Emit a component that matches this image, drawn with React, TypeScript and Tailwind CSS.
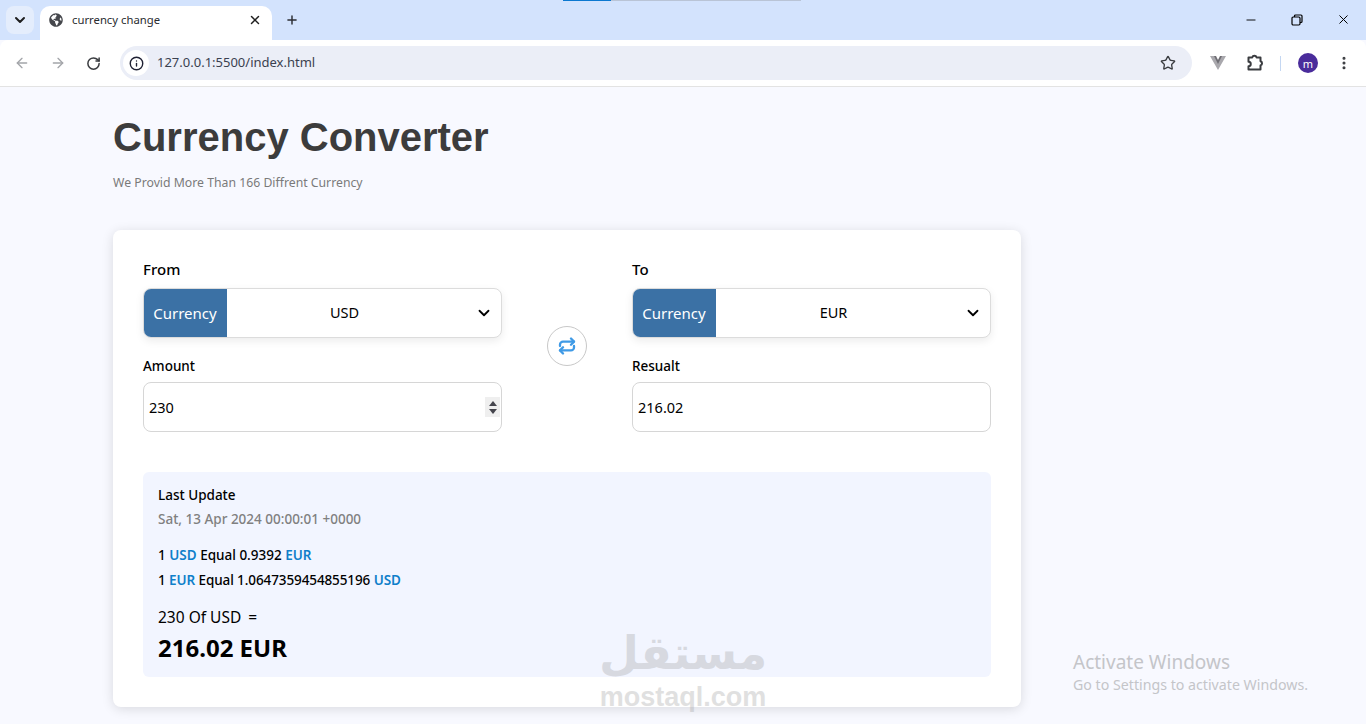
import React from 'react';
import { ArrowLeft, ArrowRight, ChevronDown, Info, Plus, RotateCw, Star, X, Minus, EllipsisVertical } from 'lucide-react';
import { FaGlobeAmericas } from 'react-icons/fa';

const ui = "font-['Noto_Sans','Open_Sans',sans-serif]";

function BrowserChrome() {
  return (
    <div className={`shrink-0 ${ui}`}>
      <div className="relative flex h-10 items-end bg-[#d3e3fd]">
        <div className="absolute left-[563px] top-0 h-px w-12 bg-[#0b78d0]" />
        <div className="absolute left-[611px] top-0 h-px w-[190px] bg-[#b9c4d6]" />
        <div className="mb-1.5 ml-1.5 flex h-7 w-7 items-center justify-center rounded-lg bg-[#e4edfc]">
          <ChevronDown className="h-4 w-4 text-[#1f1f1f]" strokeWidth={3} />
        </div>
        <div className="ml-1.5 flex h-[34px] w-[232px] items-center rounded-t-[10px] bg-white pb-[6px] pl-[9px] pr-2.5">
          <FaGlobeAmericas className="h-[14px] w-[14px] text-[#45474c]" />
          <span className="ml-[9px] flex-1 text-[11.3px] text-[#2a2c30]">currency change</span>
          <X className="h-[14px] w-[14px] text-[#1f1f1f]" strokeWidth={2.5} />
        </div>
        <Plus className="mb-[13px] ml-[13px] h-[14px] w-[14px] text-[#2c2e33]" strokeWidth={2.5} />
        <div className="flex-1" />
        <div className="mb-[13px] mr-[15px] flex items-center gap-[33px] text-black">
          <Minus className="h-[14px] w-[14px]" strokeWidth={1.6} />
          <svg viewBox="0 0 12 12" className="h-3 w-3" fill="none" stroke="currentColor" strokeWidth="1.2">
            <rect x="1" y="3" width="8" height="8" rx="1.2" />
            <path d="M3.5 3V2a1 1 0 0 1 1-1H10a1 1 0 0 1 1 1v5.5a1 1 0 0 1-1 1H9" />
          </svg>
          <X className="h-[15px] w-[15px]" strokeWidth={1.6} />
        </div>
      </div>
      <div className="flex h-[47px] items-center rounded-t-lg border-b border-[#e3e3e3] bg-white">
        <ArrowLeft className="ml-[14px] h-4 w-4 text-[#a3a5a9]" strokeWidth={2} />
        <ArrowRight className="ml-5 h-4 w-4 text-[#a3a5a9]" strokeWidth={2} />
        <RotateCw className="ml-5 h-[15px] w-[15px] text-[#3a3c40]" strokeWidth={2.4} />
        <div className="ml-[19px] flex h-[34px] w-[1072px] items-center rounded-full bg-[#ebeef7] pl-[3px] pr-[16px]">
          <div className="flex h-[26px] w-[26px] items-center justify-center rounded-full bg-white">
            <Info className="h-[15px] w-[15px] text-[#1f2133]" strokeWidth={2.2} />
          </div>
          <span className="ml-2 flex-1 text-[13px] text-[#3a4150]">127.0.0.1:5500/index.html</span>
          <Star className="h-4 w-4 text-[#3a3c40]" strokeWidth={2} />
        </div>
        <svg viewBox="0 0 16 14" className="ml-[18px] h-[14px] w-4">
          <path d="M0 0h5l3 5 3-5h5L8 14z" fill="#a9a8ad" />
          <path d="M4 0h2l2 4 2-4h2L8 8z" fill="#6f6e74" />
        </svg>
        <svg viewBox="0 0 18 18" className="ml-[20px] h-[18px] w-[18px]" fill="none" stroke="#3a3c40" strokeWidth="2" strokeLinejoin="round">
          <path d="M2.5 3.5h3.7a2.3 2.3 0 0 1 4.4 0h3.9v3.7a2.2 2.2 0 0 1 0 4.2v4.1H2.5v-3.2a2 2 0 0 0 0-4.5z" />
        </svg>
        <div className="ml-[16px] h-[15px] w-px bg-[#c4d7f2]" />
        <div className="ml-[17px] flex h-5 w-5 items-center justify-center rounded-full bg-[#4a2c9b] text-[11px] leading-none text-white">m</div>
        <EllipsisVertical className="ml-[18px] h-4 w-4 text-[#3a3c40]" strokeWidth={2.6} />
      </div>
    </div>
  );
}

function CurrencySelect({ code }: { code: string }) {
  return (
    <div className="flex h-[50px] overflow-hidden rounded-lg border border-[#dcdcdc] bg-white shadow-[0_3px_8px_rgba(0,0,0,0.08)]">
      <div className="-my-px -ml-px flex w-[84px] items-center justify-center bg-[#3b71a5] text-[15px] text-white">Currency</div>
      <div className="flex flex-1 items-center pr-2">
        <span className="flex-1 pr-[13px] text-center text-[14.5px] text-black">{code}</span>
        <ChevronDown className="h-[18px] w-[18px] text-black" strokeWidth={2.4} />
      </div>
    </div>
  );
}

function Spinner() {
  return (
    <div className="flex h-5 w-[15px] flex-col items-center justify-center gap-[3px] bg-[#efefef]">
      <div className="h-0 w-0 border-x-[4px] border-b-[5px] border-x-transparent border-b-[#45454d]" />
      <div className="h-0 w-0 border-x-[4px] border-t-[5px] border-x-transparent border-t-[#45454d]" />
    </div>
  );
}

function Field({ value, spinner }: { value: string; spinner?: boolean }) {
  return (
    <div className="flex h-[50px] items-center justify-between rounded-lg border border-[#d6d6d6] bg-white pl-[5px] pr-[1px] text-[14.5px] text-black">
      <span className="pt-px">{value}</span>
      {spinner && <Spinner />}
    </div>
  );
}

function Code({ children }: { children: React.ReactNode }) {
  return <span className="font-semibold text-[#0f7fca]">{children}</span>;
}

function Converter() {
  return (
    <div className={`mt-[37px] w-[908px] rounded-lg bg-white px-[30px] pb-[30px] pt-[27px] shadow-[0_2px_12px_rgba(0,0,0,0.13)] ${ui}`}>
      <div className="grid grid-cols-[359px_130px_359px]">
        <div>
          <div className="mb-[9px] h-[22px] pt-px text-[15px] font-medium leading-[22px] text-black">From</div>
          <CurrencySelect code="USD" />
          <div className="mb-[6px] mt-[18px] h-5 text-[13.5px] font-medium leading-5 text-black">Amount</div>
          <Field value="230" spinner />
        </div>
        <div className="flex items-start justify-center pt-[69px]">
          <div className="flex h-10 w-10 items-center justify-center rounded-full border border-[#c8c8c8] bg-white">
            <svg viewBox="0 0 18 18" className="h-[18px] w-[18px]" fill="none" stroke="#3f9ae6" strokeWidth="2.3" strokeLinecap="round" strokeLinejoin="round">
              <path d="M2 9V7.6a3 3 0 0 1 3-3h11" />
              <path d="M13 1.5l3 3.1-3 3.1" />
              <path d="M16 9v1.4a3 3 0 0 1-3 3H2" />
              <path d="M5 10.3l-3 3.1 3 3.1" />
            </svg>
          </div>
        </div>
        <div>
          <div className="mb-[9px] h-[22px] pt-px text-[15px] font-medium leading-[22px] text-black">To</div>
          <CurrencySelect code="EUR" />
          <div className="mb-[6px] mt-[18px] h-5 text-[13.5px] font-medium leading-5 text-black">Resualt</div>
          <Field value="216.02" />
        </div>
      </div>
      <div className="mt-10 h-[205px] rounded-md bg-[#f2f5ff] px-[15px] pt-[13px]">
        <div className="text-[13.5px] font-medium leading-5 text-black">Last Update</div>
        <div className="mt-1 text-[13.5px] font-medium leading-5 text-[#808080]">Sat, 13 Apr 2024 00:00:01 +0000</div>
        <div className="mt-4 text-[13.5px] font-medium leading-5 text-black">1 <Code>USD</Code> Equal 0.9392 <Code>EUR</Code></div>
        <div className="mt-[5px] text-[13.5px] font-medium leading-5 tracking-[-0.1px] text-black">1 <Code>EUR</Code> Equal 1.0647359454855196 <Code>USD</Code></div>
        <div className="mt-[17px] text-[15.5px] leading-5 text-black">230 Of USD <span className="ml-[3px]">=</span></div>
        <div className="mt-[5px] text-[24px] font-bold leading-8 text-black">216.02 EUR</div>
      </div>
    </div>
  );
}

export default function App() {
  return (
    <div className="relative flex h-[724px] w-full flex-col overflow-hidden bg-[#f8f9ff]">
      <BrowserChrome />
      <main className="flex-1 pl-[113px] pt-[25px]">
        <h1 className="font-['Liberation_Sans',Arial,sans-serif] text-[40px] font-bold leading-[50px] text-[#3c3c3c]">Currency Converter</h1>
        <p className={`mt-[11px] text-[12.25px] leading-5 text-[#7a7a7a] ${ui}`}>We Provid More Than 166 Diffrent Currency</p>
        <Converter />
      </main>
      <div className="pointer-events-none absolute left-[600px] top-[622px] flex w-[166px] flex-col items-center text-[#9a9a9a] opacity-30">
        <span className="font-['DejaVu_Sans',sans-serif] text-[46px] font-bold leading-[62px]" dir="rtl">مستقل</span>
        <span className="font-['Liberation_Sans',Arial,sans-serif] text-[27px] font-bold leading-[26px]">mostaql.com</span>
      </div>
      <div className={`pointer-events-none absolute left-[1073px] top-[650px] text-[#c4c5c9] ${ui}`}>
        <div className="text-[19px] leading-6">Activate Windows</div>
        <div className="mt-px text-[14.2px] leading-5">Go to Settings to activate Windows.</div>
      </div>
    </div>
  );
}
